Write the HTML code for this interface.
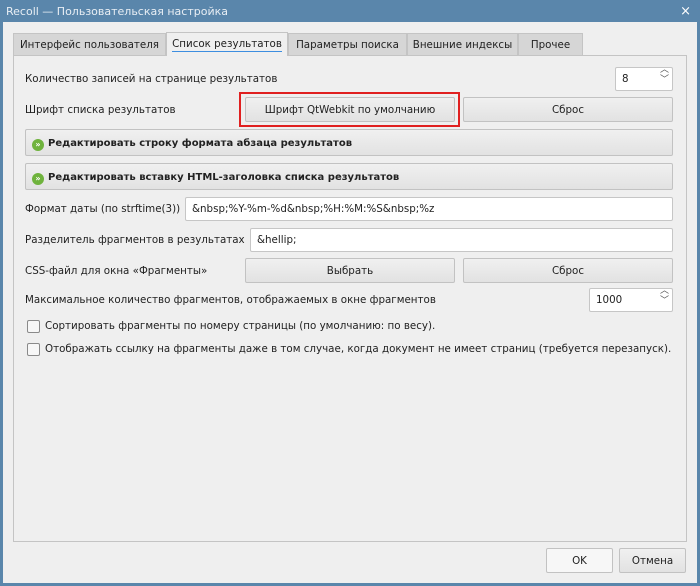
<!DOCTYPE html>
<html><head><meta charset="utf-8"><style>
*{box-sizing:border-box;margin:0;padding:0}
body{width:700px;height:586px;overflow:hidden;background:#5a86ab;font-family:"DejaVu Sans","Liberation Sans",sans-serif;font-size:10.3px;color:#222;position:relative}
.a{position:absolute;white-space:nowrap}
#win{position:absolute;left:3px;top:22px;width:694px;height:561px;background:#efefef}
.title{left:6px;top:5px;color:#e8eef4;font-size:11px}
.tab{top:33px;height:22px;background:#d6d6d6;border:1px solid #c4c4c4;border-bottom:none;text-align:center;line-height:22px}
.pane{left:13px;top:55px;width:674px;height:487px;border:1px solid #c4c4c4;background:#efefef}
.btn{background:linear-gradient(#f0f0f0,#e2e2e2);border:1px solid #c2c2c2;border-radius:2px;text-align:center;height:25px;line-height:24px}
.inp{background:#fff;border:1px solid #c6c6c6;border-radius:2px;height:24px;line-height:22px;padding-left:6px}
.lbl{left:25px}
.cb{width:13px;height:13px;border:1px solid #8a8a8a;border-radius:2px;background:#f7f7f7}
.ic{display:inline-block;width:12px;height:12px;border-radius:50%;background:#6fb33d;color:#fff;font-size:8px;line-height:12px;text-align:center;vertical-align:-1px;margin-right:4px;font-weight:bold}
.bb{font-size:10px;font-weight:bold}
</style></head><body>
<div class="a title">Recoll — Пользовательская настройка</div>
<div class="a" style="right:9px;top:4px;color:#fff;font-size:13px">×</div>
<div id="win"></div>
<div class="a pane"></div>
<div class="a tab" style="left:13px;width:153px">Интерфейс пользователя</div>
<div class="a tab" style="left:166px;width:122px;background:#efefef;top:32px;height:24px"><span style="border-bottom:1px solid #3d8ee0;padding-bottom:1px">Список результатов</span></div>
<div class="a tab" style="left:288px;width:119px">Параметры поиска</div>
<div class="a tab" style="left:407px;width:111px">Внешние индексы</div>
<div class="a tab" style="left:518px;width:65px">Прочее</div>

<div class="a lbl" style="top:73px">Количество записей на странице результатов</div>
<div class="a inp" style="left:615px;top:67px;width:58px">8<span class="a" style="right:3px;top:-3px;font-size:9px;line-height:10px;color:#555">︿<br>﹀</span></div>

<div class="a lbl" style="top:104px">Шрифт списка результатов</div>
<div class="a" style="left:239px;top:92px;width:221px;height:35px;border:2px solid #e02020"></div>
<div class="a btn" style="left:245px;top:97px;width:210px">Шрифт QtWebkit по умолчанию</div>
<div class="a btn" style="left:463px;top:97px;width:210px">Сброс</div>

<div class="a btn bb" style="left:25px;top:129px;width:648px;height:27px;line-height:27px;text-align:left;padding-left:6px"><span class="ic">»</span>Редактировать строку формата абзаца результатов</div>
<div class="a btn bb" style="left:25px;top:163px;width:648px;height:27px;line-height:27px;text-align:left;padding-left:6px"><span class="ic">»</span>Редактировать вставку HTML-заголовка списка результатов</div>

<div class="a lbl" style="top:203px">Формат даты (по strftime(3))</div>
<div class="a inp" style="left:185px;top:197px;width:488px">&amp;nbsp;%Y-%m-%d&amp;nbsp;%H:%M:%S&amp;nbsp;%z</div>

<div class="a lbl" style="top:234px">Разделитель фрагментов в результатах</div>
<div class="a inp" style="left:250px;top:228px;width:423px">&amp;hellip;</div>

<div class="a lbl" style="top:265px">CSS-файл для окна «Фрагменты»</div>
<div class="a btn" style="left:245px;top:258px;width:210px">Выбрать</div>
<div class="a btn" style="left:463px;top:258px;width:210px">Сброс</div>

<div class="a lbl" style="top:294px">Максимальное количество фрагментов, отображаемых в окне фрагментов</div>
<div class="a inp" style="left:589px;top:288px;width:84px">1000<span class="a" style="right:3px;top:-3px;font-size:9px;line-height:10px;color:#555">︿<br>﹀</span></div>

<div class="a cb" style="left:27px;top:320px"></div>
<div class="a" style="left:45px;top:320px">Сортировать фрагменты по номеру страницы (по умолчанию: по весу).</div>
<div class="a cb" style="left:27px;top:343px"></div>
<div class="a" style="left:45px;top:343px">Отображать ссылку на фрагменты даже в том случае, когда документ не имеет страниц (требуется перезапуск).</div>

<div class="a btn" style="left:546px;top:548px;width:67px;background:#f7f7f7">OK</div>
<div class="a btn" style="left:619px;top:548px;width:67px">Отмена</div>
</body></html>
